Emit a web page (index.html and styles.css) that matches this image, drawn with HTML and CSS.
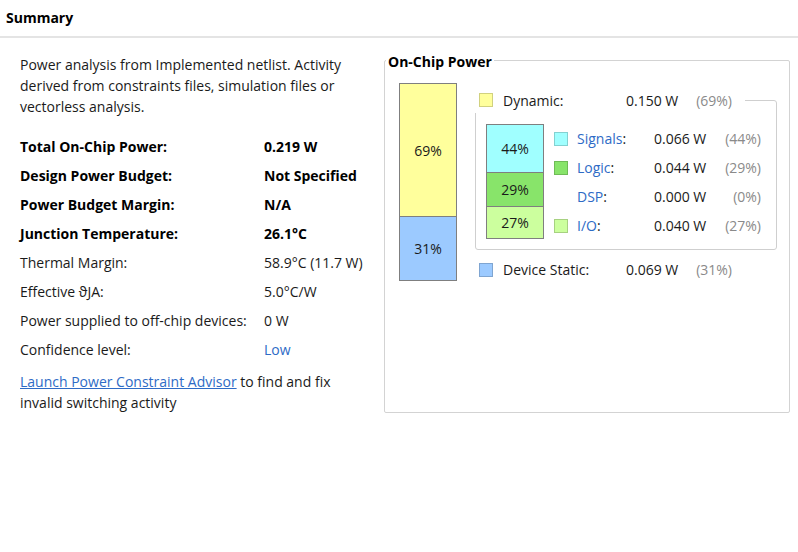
FILE: index.html
```html
<!DOCTYPE html>
<html>
<head>
<meta charset="utf-8">
<link rel="stylesheet" href="styles.css">
</head>
<body>
<div class="header">Summary</div>
<div class="main">
  <div class="left">
    <p class="desc">Power analysis from Implemented netlist. Activity derived from constraints files, simulation files or vectorless analysis.</p>
    <div class="table">
      <div class="lbl b">Total On-Chip Power:</div><div class="val b">0.219 W</div>
      <div class="lbl b">Design Power Budget:</div><div class="val b">Not Specified</div>
      <div class="lbl b">Power Budget Margin:</div><div class="val b">N/A</div>
      <div class="lbl b">Junction Temperature:</div><div class="val b">26.1°C</div>
      <div class="lbl">Thermal Margin:</div><div class="val">58.9°C (11.7 W)</div>
      <div class="lbl">Effective ϑJA:</div><div class="val">5.0°C/W</div>
      <div class="lbl">Power supplied to off-chip devices:</div><div class="val">0 W</div>
      <div class="lbl">Confidence level:</div><div class="val"><a class="link">Low</a></div>
    </div>
    <p class="advisor"><a class="link u">Launch Power Constraint Advisor</a> to find and fix invalid switching activity</p>
  </div>
  <div class="chip">
    <div class="chip-title">On-Chip Power</div>
    <div class="chip-body">
      <div class="bar big">
        <div class="seg yellow" style="height:132px">69%</div>
        <div class="seg blue" style="height:63px">31%</div>
      </div>
      <div class="details">
        <div class="dyn-group">
          <div class="row dyn-head">
            <span class="sq yellow"></span><span class="name">Dynamic:</span><span class="num">0.150 W</span><span class="pct">(69%)</span>
          </div>
          <div class="bar small">
            <div class="seg cyan" style="height:47px">44%</div>
            <div class="seg green" style="height:33px">29%</div>
            <div class="seg lgreen" style="height:31px">27%</div>
          </div>
          <div class="sub">
            <div class="row"><span class="sq cyan"></span><span class="name"><a class="link">Signals</a>:</span><span class="num">0.066 W</span><span class="pct">(44%)</span></div>
            <div class="row"><span class="sq green"></span><span class="name"><a class="link">Logic</a>:</span><span class="num">0.044 W</span><span class="pct">(29%)</span></div>
            <div class="row"><span class="sq none"></span><span class="name"><a class="link">DSP</a>:</span><span class="num">0.000 W</span><span class="pct">(0%)</span></div>
            <div class="row"><span class="sq lgreen"></span><span class="name"><a class="link">I/O</a>:</span><span class="num">0.040 W</span><span class="pct">(27%)</span></div>
          </div>
        </div>
        <div class="row static">
          <span class="sq blue"></span><span class="name">Device Static:</span><span class="num">0.069 W</span><span class="pct">(31%)</span>
        </div>
      </div>
    </div>
  </div>
</div>
</body>
</html>
```

FILE: styles.css
```css
html, body {
  margin: 0;
  padding: 0;
  background: #ffffff;
}
body {
  font-family: "Open Sans", "Liberation Sans", sans-serif;
  font-size: 14px;
  color: #1a1a1a;
  width: 798px;
  height: 552px;
  overflow: hidden;
}
.header {
  height: 38px;
  line-height: 36px;
  padding-left: 6px;
  font-weight: 700;
  font-size: 14px;
  color: #000;
  border-bottom: 2px solid #e4e4e4;
  box-sizing: border-box;
}
.main {
  display: flex;
  align-items: flex-start;
}
.left {
  width: 364px;
  padding-left: 20px;
}
.desc {
  margin: 16px 0 0 0;
  line-height: 21px;
  width: 340px;
}
.table {
  display: grid;
  grid-template-columns: 244px auto;
  grid-auto-rows: 29px;
  align-items: center;
  margin-top: 15px;
}
.b {
  font-weight: 700;
  color: #000;
}
.link {
  color: #2e6bc6;
}
.u {
  text-decoration: underline;
}
.advisor {
  margin: 7px 0 0 0;
  line-height: 21px;
  width: 340px;
}
.chip {
  position: relative;
  margin-top: 22px;
  width: 406px;
  height: 353px;
  box-sizing: border-box;
  border: 1px solid #d3d3d3;
  border-radius: 2px;
}
.chip-title {
  position: absolute;
  top: -8px;
  left: 1px;
  padding: 0 2px;
  background: #fff;
  font-weight: 700;
  color: #000;
  line-height: 18px;
}
.chip-body {
  display: flex;
  align-items: flex-start;
  padding: 22px 0 0 14px;
}
.bar {
  display: flex;
  flex-direction: column;
  border: 1px solid #7f7f7f;
  width: 56px;
}
.seg {
  display: flex;
  align-items: center;
  justify-content: center;
  color: #1a1a1a;
}
.seg + .seg {
  border-top: 1px solid #7f7f7f;
}
.yellow { background: #ffff9c; }
.blue { background: #9ccaff; }
.cyan { background: #a0ffff; }
.green { background: #88e46a; }
.lgreen { background: #ccff9e; }
.details {
  margin-left: 18px;
  padding-top: 17px;
}
.dyn-group {
  position: relative;
  width: 302px;
  height: 150px;
  box-sizing: border-box;
  border: 1px solid #cfcfcf;
  border-radius: 3px;
  display: flex;
  align-items: flex-start;
  padding: 23px 0 0 10px;
}
.row {
  display: flex;
  align-items: center;
  height: 29px;
}
.sq {
  width: 14px;
  height: 14px;
  box-sizing: border-box;
  border: 1px solid rgba(0, 0, 0, 0.18);
  flex: none;
}
.sq.none {
  border: none;
}
.name {
  margin-left: 9px;
}
.pct {
  color: #8a8a8a;
  text-align: right;
}
.dyn-head {
  position: absolute;
  top: -14px;
  left: -4px;
  height: 26px;
  width: 273px;
  background: #fff;
  padding-left: 7px;
  box-sizing: border-box;
}
.dyn-head .name, .static .name {
  margin-left: 10px;
  width: 123px;
}
.dyn-head .num, .static .num {
  width: 66px;
}
.dyn-head .pct, .static .pct {
  width: 40px;
}
.sub {
  margin-left: 10px;
}
.sub .name {
  width: 77px;
}
.sub .num {
  width: 66px;
}
.sub .pct {
  width: 41px;
}
.static {
  margin-top: 5px;
  padding-left: 4px;
}
```
